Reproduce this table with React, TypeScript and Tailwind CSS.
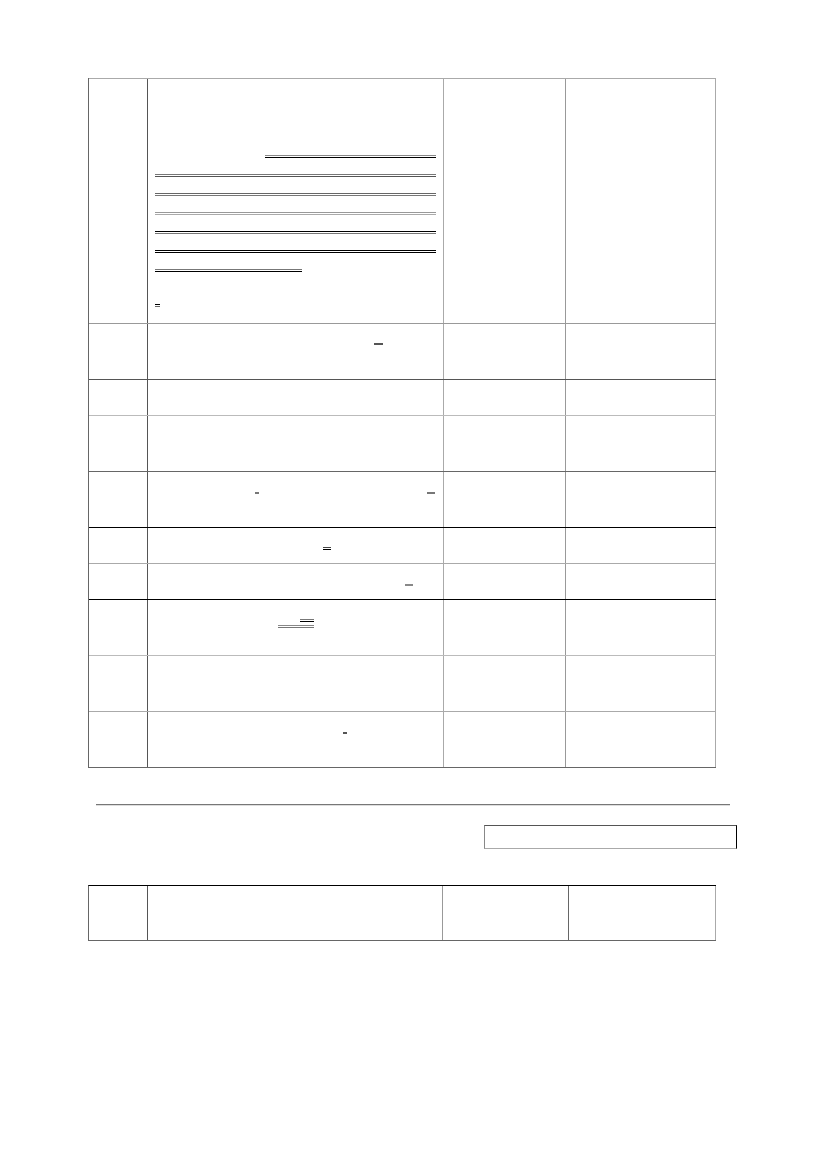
const rows = [
  { h: "h-[245px]", line: "border-[#aaa]" },
  { h: "h-[56px]", line: "border-[#999]" },
  { h: "h-[36px]", line: "border-[#555]" },
  { h: "h-[56px]", line: "border-[#bbb]" },
  { h: "h-[56px]", line: "border-[#666]" },
  { h: "h-[36px]", line: "border-black" },
  { h: "h-[36px]", line: "border-[#aaa]" },
  { h: "h-[56px]", line: "border-black" },
  { h: "h-[56px]", line: "border-[#bbb]" },
  { h: "h-[57px]", line: "border-[#aaa]" },
]

function Rule({ className }: { className: string }) {
  return <div className={`h-[3px] border-t border-b ${className}`} />
}

function Marks({ index }: { index: number }) {
  switch (index) {
    case 0:
      return (
        <div className="flex flex-col pt-[76px] pl-[7px] pr-[6px] gap-[16px]">
          <Rule className="ml-[110px] w-[171px] border-t-[#888] border-b-black" />
          <Rule className="w-[281px] border-t-[#777] border-b-[#555]" />
          <Rule className="w-[281px] border-t-[#666] border-b-[#777]" />
          <Rule className="w-[281px] border-t-[#999] border-b-[#aaa]" />
          <Rule className="w-[281px] border-t-black border-b-[#777]" />
          <Rule className="w-[281px] border-t-black border-b-black" />
          <Rule className="w-[147px] border-t-[#777] border-b-black" />
          <Rule className="mt-[16px] w-[5px] border-t-black border-b-[#666]" />
        </div>
      )
    case 1:
      return <div className="ml-[226px] mt-[19px] h-[2px] w-[9px] bg-[#555]" />
    case 4:
      return (
        <div className="flex items-start pt-[20px]">
          <div className="ml-[107px] h-[2px] w-[4px] bg-[#777]" />
          <div className="ml-[168px] h-[2px] w-[8px] bg-[#777]" />
        </div>
      )
    case 5:
      return <Rule className="ml-[175px] mt-[19px] w-[8px] border-t-[#444] border-b-black" />
    case 6:
      return <div className="ml-[257px] mt-[20px] h-[2px] w-[8px] bg-[#888]" />
    case 7:
      return (
        <div className="flex flex-col items-start pt-[19px]">
          <div className="ml-[152px] h-[3px] w-[14px] border-t border-b border-t-[#777] border-b-black" />
          <Rule className="ml-[130px] mt-[3px] w-[36px] border-t-[#888] border-b-[#777]" />
        </div>
      )
    case 9:
      return <div className="ml-[195px] mt-[20px] h-[2px] w-[4px] bg-[#555]" />
    default:
      return null
  }
}

export default function App() {
  return (
    <div className="w-[827px] h-[1169px] bg-white pt-[78px] pl-[88px]">
      <div className="w-[628px] border-l border-[#666]">
        {rows.map((r, i) => (
          <div
            key={i}
            className={`flex border-t ${r.line} ${r.h} ${i === rows.length - 1 ? "border-b border-b-[#666]" : ""}`}
          >
            <div className="w-[59px] shrink-0 border-r border-[#555]" />
            <div className="w-[296px] shrink-0 border-r border-[#aaa]">
              <Marks index={i} />
            </div>
            <div className="w-[122px] shrink-0 border-r border-[#999]" />
            <div className="w-[150px] shrink-0 border-r border-[#aaa]" />
          </div>
        ))}
      </div>

      <div className="mt-[36px] ml-[8px] w-[634px] h-[2px] border-t border-b border-t-[#777] border-b-[#ddd]" />

      <div className="mt-[19px] ml-[396px] w-[253px] h-[24px] border border-t-[#555] border-r-black border-b-[#aaa] border-l-[#888]" />

      <div className="mt-[36px] flex w-[628px] h-[56px] border-t border-b border-l border-t-black border-b-[#666] border-l-[#666]">
        <div className="w-[59px] shrink-0 border-r border-[#555]" />
        <div className="w-[295px] shrink-0 border-r border-[#999]" />
        <div className="w-[126px] shrink-0 border-r border-[#666]" />
        <div className="w-[147px] shrink-0 border-r border-[#aaa]" />
      </div>
    </div>
  )
}
